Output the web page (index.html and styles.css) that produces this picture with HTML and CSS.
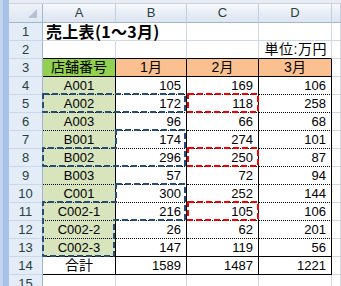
FILE: index.html
```html
<!DOCTYPE html>
<html lang="ja">
<head>
<meta charset="utf-8">
<title>売上表</title>
<link rel="stylesheet" href="styles.css">
</head>
<body>
<div class="window">
  <div class="leftbar"></div>
  <div class="content">
    <div class="topstrip"></div>
    <div class="sheet">
      <div class="corner"><span class="tri"></span></div>
      <div class="ch">A</div><div class="ch">B</div><div class="ch">C</div><div class="ch">D</div><div class="ch"></div>

      <div class="rh">1</div><div class="c title">売上表(1～3月)</div><div class="c"></div><div class="c"></div><div class="c"></div><div class="c"></div>
      <div class="rh">2</div><div class="c bb"></div><div class="c bb"></div><div class="c bb"></div><div class="c bb num jp unit">単位:万円</div><div class="c"></div>

      <div class="rh">3</div><div class="c t bs green jp ctr">店舗番号</div><div class="c t bs orange jp ctr">1月</div><div class="c t bs orange jp ctr">2月</div><div class="c t bs orange jp ctr">3月</div><div class="c"></div>

      <div class="rh">4</div><div class="c t dot code">A001</div><div class="c t dot num">105</div><div class="c t dot num">169</div><div class="c t dot num">106</div><div class="c"></div>
      <div class="rh">5</div><div class="c t dot code">A002</div><div class="c t dot num">172</div><div class="c t dot num">118</div><div class="c t dot num">258</div><div class="c"></div>
      <div class="rh">6</div><div class="c t dot code">A003</div><div class="c t dot num">96</div><div class="c t dot num">66</div><div class="c t dot num">68</div><div class="c"></div>
      <div class="rh">7</div><div class="c t dot code">B001</div><div class="c t dot num">174</div><div class="c t dot num">274</div><div class="c t dot num">101</div><div class="c"></div>
      <div class="rh">8</div><div class="c t dot code">B002</div><div class="c t dot num">296</div><div class="c t dot num">250</div><div class="c t dot num">87</div><div class="c"></div>
      <div class="rh">9</div><div class="c t dot code">B003</div><div class="c t dot num">57</div><div class="c t dot num">72</div><div class="c t dot num">94</div><div class="c"></div>
      <div class="rh">10</div><div class="c t dot code">C001</div><div class="c t dot num">300</div><div class="c t dot num">252</div><div class="c t dot num">144</div><div class="c"></div>
      <div class="rh">11</div><div class="c t dot code">C002-1</div><div class="c t dot num">216</div><div class="c t dot num">105</div><div class="c t dot num">106</div><div class="c"></div>
      <div class="rh">12</div><div class="c t dot code">C002-2</div><div class="c t dot num">26</div><div class="c t dot num">62</div><div class="c t dot num">201</div><div class="c"></div>
      <div class="rh">13</div><div class="c t bs code">C002-3</div><div class="c t bs num">147</div><div class="c t bs num">119</div><div class="c t bs num">56</div><div class="c"></div>
      <div class="rh">14</div><div class="c t bs jp ctr">合計</div><div class="c t bs num">1589</div><div class="c t bs num">1487</div><div class="c t bs num">1221</div><div class="c"></div>
      <div class="rh">15</div><div class="c"></div><div class="c"></div><div class="c"></div><div class="c"></div><div class="c"></div>
    </div>
  </div>
  <svg class="marquee" width="341" height="286" viewBox="0 0 341 286" aria-hidden="true">
    <g class="ants-blue">
      <path d="M43 94 H185 V112 H43 Z"/>
      <path d="M116 130 H185 V166 H43 V148 H116 Z"/>
      <path d="M116 184 H185 V220 H114 V256 H43 V202 H116 Z"/>
    </g>
    <g class="ants-red">
      <path d="M188 94 H258 V112 H188 Z"/>
      <path d="M188 148 H258 V166 H188 Z"/>
      <path d="M188 202 H258 V220 H188 Z"/>
    </g>
  </svg>
</div>
</body>
</html>
```

FILE: styles.css
```css
html, body {
  margin: 0;
  padding: 0;
  background: #ffffff;
  overflow: hidden;
}

.window {
  position: relative;
  width: 341px;
  height: 286px;
  display: flex;
  overflow: hidden;
}

.leftbar {
  width: 9px;
  flex: none;
  background: linear-gradient(to right, #c4d6ee 0, #c4d6ee 3px, #a3bfe5 3px, #a9c4e8 9px);
}

.content {
  flex: 1;
  display: flex;
  flex-direction: column;
  min-width: 0;
}

.topstrip {
  height: 4px;
  flex: none;
  background: #e9edf3;
  box-sizing: border-box;
  border-bottom: 1px solid #c9d4e3;
}

.sheet {
  display: grid;
  grid-template-columns: 34px 73px 71px 72px 73px 9px;
  grid-template-rows: 19px repeat(15, 18px);
  font-family: "Liberation Sans", "Noto Sans CJK JP", sans-serif;
  font-size: 13px;
  color: #000;
}

.sheet > div {
  box-sizing: border-box;
  line-height: 17px;
  white-space: nowrap;
  overflow: hidden;
}

.corner {
  position: relative;
  background: linear-gradient(#eef2f8, #dfe7f2);
  border-right: 1px solid #9eb6ce;
  border-bottom: 1px solid #9eb6ce;
}

.tri {
  position: absolute;
  right: 5px;
  bottom: 4px;
  width: 0;
  height: 0;
  border-left: 9px solid transparent;
  border-bottom: 9px solid #b4c2d3;
}

.ch {
  background: linear-gradient(#f7f9fc, #e6ecf5 60%, #dde5f0);
  border-right: 1px solid #c2cfe1;
  border-bottom: 1px solid #9eb6ce;
  text-align: center;
  color: #27413e;
  line-height: 18px !important;
}

.rh {
  background: #e4ecf7;
  border-right: 1px solid #9eb6ce;
  border-bottom: 1px solid #c9d7ea;
  text-align: center;
  color: #27413e;
}

.c {
  background: #ffffff;
  border-right: 1px solid #d0d7e5;
  border-bottom: 1px solid #d0d7e5;
}

.title {
  overflow: visible !important;
  border-right-color: #ffffff !important;
  font-family: "Noto Sans CJK JP", sans-serif;
  font-weight: bold;
  font-size: 16px;
  letter-spacing: 0.3px;
  padding-left: 3px;
  position: relative;
  z-index: 1;
}

.bb { border-bottom-color: #000; }
.t { border-right-color: #000; }
.bs { border-bottom: 1px solid #000; }
.dot { border-bottom: 1px dotted #000; }

.green { background: #92d050; }
.orange { background: #fac090; }
.code { background: #d7e4bc; text-align: center; }
.ctr { text-align: center; }
.num { text-align: right; padding-right: 5px; }
.jp { font-size: 14px; }
.unit { padding-right: 4px; letter-spacing: 0.5px; }

.marquee {
  position: absolute;
  left: 0;
  top: 0;
  pointer-events: none;
}

.marquee path {
  fill: none;
  stroke-width: 2;
  stroke-dasharray: 6 3;
  stroke-linejoin: round;
}

.ants-blue path { stroke: #244c7c; }
.ants-red path { stroke: #f20000; }
```
